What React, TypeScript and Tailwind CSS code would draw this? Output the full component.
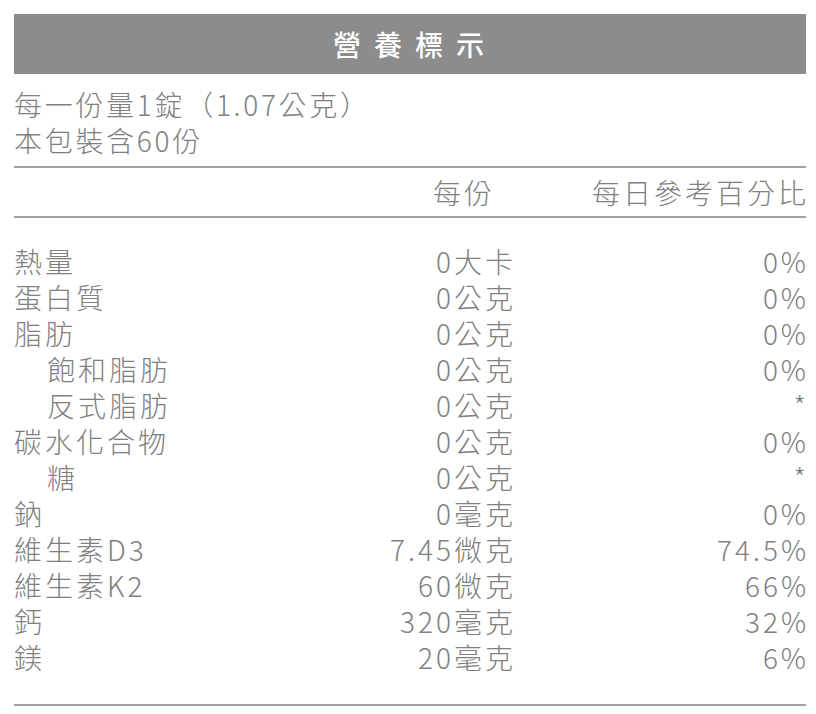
import React from "react";

const rows: { label: string; indent?: boolean; amount: string; pct: string }[] = [
  { label: "熱量", amount: "0大卡", pct: "0%" },
  { label: "蛋白質", amount: "0公克", pct: "0%" },
  { label: "脂肪", amount: "0公克", pct: "0%" },
  { label: "飽和脂肪", indent: true, amount: "0公克", pct: "0%" },
  { label: "反式脂肪", indent: true, amount: "0公克", pct: "*" },
  { label: "碳水化合物", amount: "0公克", pct: "0%" },
  { label: "糖", indent: true, amount: "0公克", pct: "*" },
  { label: "鈉", amount: "0毫克", pct: "0%" },
  { label: "維生素D3", amount: "7.45微克", pct: "74.5%" },
  { label: "維生素K2", amount: "60微克", pct: "66%" },
  { label: "鈣", amount: "320毫克", pct: "32%" },
  { label: "鎂", amount: "20毫克", pct: "6%" },
];

export default function App() {
  return (
    <div
      className="w-[816px] h-[714px] bg-white pl-[14px] pr-[10px] pt-[14px] text-[#808080] font-extralight"
      style={{ fontFamily: '"Noto Sans CJK TC", "Noto Sans", sans-serif' }}
    >
      <div className="h-[60px] bg-[#8c8c8c] flex items-center justify-center pl-[10px]">
        <span className="text-white text-[28px] font-medium tracking-[13px] leading-none">營養標示</span>
      </div>
      <div className="pt-[12px] text-[28px] leading-[36px] tracking-[2.7px]">
        <div>每一份量1錠（1.07公克）</div>
        <div>本包裝含60份</div>
      </div>
      <div className="mt-[8px] border-t-2 border-b-2 border-[#a3a3a3] h-[52px] flex items-center text-[28px] leading-[36px] tracking-[3px]">
        <div className="flex-1" />
        <div className="w-[200px] text-right pr-[21px]">每份</div>
        <div className="w-[293px] mr-[-3px] text-right">每日參考百分比</div>
      </div>
      <div className="pt-[25px] pb-[29px] border-b-2 border-[#a3a3a3] text-[28px] tracking-[3px]">
        {rows.map((r) => (
          <div key={r.label} className="flex h-[36px] items-center leading-[36px]">
            <div className={"flex-1 " + (r.indent ? "pl-[33px]" : "")}>{r.label}</div>
            <div className="w-[200px] text-right">{r.amount}</div>
            <div className="w-[293px] mr-[-3px] text-right">{r.pct}</div>
          </div>
        ))}
      </div>
    </div>
  );
}
